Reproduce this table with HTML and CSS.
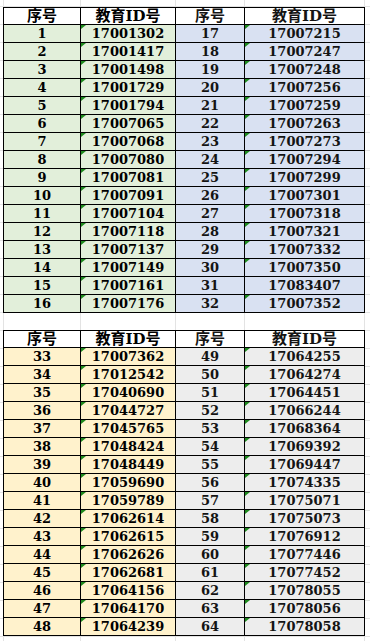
FILE: index.html
```html
<!DOCTYPE html>
<html lang="zh">
<head>
<meta charset="utf-8">
<title>教育ID号</title>
<link rel="stylesheet" href="styles.css">
</head>
<body>
<div class="sheet">
  <div class="tbl">
    <div class="c h b">序号</div><div class="c h b">教育ID号</div><div class="c h r">序号</div><div class="c h r">教育ID号</div>
    <div class="c g b">1</div><div class="c g b t">17001302</div><div class="c bl r">17</div><div class="c bl r t">17007215</div>
    <div class="c g b">2</div><div class="c g b t">17001417</div><div class="c bl r">18</div><div class="c bl r t">17007247</div>
    <div class="c g b">3</div><div class="c g b t">17001498</div><div class="c bl r">19</div><div class="c bl r t">17007248</div>
    <div class="c g b">4</div><div class="c g b t">17001729</div><div class="c bl r">20</div><div class="c bl r t">17007256</div>
    <div class="c g b">5</div><div class="c g b t">17001794</div><div class="c bl r">21</div><div class="c bl r t">17007259</div>
    <div class="c g b">6</div><div class="c g b t">17007065</div><div class="c bl r">22</div><div class="c bl r t">17007263</div>
    <div class="c g b">7</div><div class="c g b t">17007068</div><div class="c bl r">23</div><div class="c bl r t">17007273</div>
    <div class="c g b">8</div><div class="c g b t">17007080</div><div class="c bl r">24</div><div class="c bl r t">17007294</div>
    <div class="c g b">9</div><div class="c g b t">17007081</div><div class="c bl r">25</div><div class="c bl r t">17007299</div>
    <div class="c g b">10</div><div class="c g b t">17007091</div><div class="c bl r">26</div><div class="c bl r t">17007301</div>
    <div class="c g b">11</div><div class="c g b t">17007104</div><div class="c bl r">27</div><div class="c bl r t">17007318</div>
    <div class="c g b">12</div><div class="c g b t">17007118</div><div class="c bl r">28</div><div class="c bl r t">17007321</div>
    <div class="c g b">13</div><div class="c g b t">17007137</div><div class="c bl r">29</div><div class="c bl r t">17007332</div>
    <div class="c g b">14</div><div class="c g b t">17007149</div><div class="c bl r">30</div><div class="c bl r t">17007350</div>
    <div class="c g b">15</div><div class="c g b t">17007161</div><div class="c bl r">31</div><div class="c bl r">17083407</div>
    <div class="c g b">16</div><div class="c g b t">17007176</div><div class="c bl r">32</div><div class="c bl r t">17007352</div>
  </div>
  <div class="tbl">
    <div class="c h b">序号</div><div class="c h b">教育ID号</div><div class="c h r">序号</div><div class="c h r">教育ID号</div>
    <div class="c o b">33</div><div class="c o b t">17007362</div><div class="c gr r">49</div><div class="c gr r t">17064255</div>
    <div class="c o b">34</div><div class="c o b t">17012542</div><div class="c gr r">50</div><div class="c gr r t">17064274</div>
    <div class="c o b">35</div><div class="c o b t">17040690</div><div class="c gr r">51</div><div class="c gr r t">17064451</div>
    <div class="c o b">36</div><div class="c o b t">17044727</div><div class="c gr r">52</div><div class="c gr r t">17066244</div>
    <div class="c o b">37</div><div class="c o b t">17045765</div><div class="c gr r">53</div><div class="c gr r t">17068364</div>
    <div class="c o b">38</div><div class="c o b t">17048424</div><div class="c gr r">54</div><div class="c gr r t">17069392</div>
    <div class="c o b">39</div><div class="c o b t">17048449</div><div class="c gr r">55</div><div class="c gr r t">17069447</div>
    <div class="c o b">40</div><div class="c o b t">17059690</div><div class="c gr r">56</div><div class="c gr r t">17074335</div>
    <div class="c o b">41</div><div class="c o b t">17059789</div><div class="c gr r">57</div><div class="c gr r t">17075071</div>
    <div class="c o b">42</div><div class="c o b t">17062614</div><div class="c gr r">58</div><div class="c gr r t">17075073</div>
    <div class="c o b">43</div><div class="c o b t">17062615</div><div class="c gr r">59</div><div class="c gr r t">17076912</div>
    <div class="c o b">44</div><div class="c o b t">17062626</div><div class="c gr r">60</div><div class="c gr r t">17077446</div>
    <div class="c o b">45</div><div class="c o b t">17062681</div><div class="c gr r">61</div><div class="c gr r t">17077452</div>
    <div class="c o b">46</div><div class="c o b t">17064156</div><div class="c gr r">62</div><div class="c gr r t">17078055</div>
    <div class="c o b">47</div><div class="c o b t">17064170</div><div class="c gr r">63</div><div class="c gr r t">17078056</div>
    <div class="c o b">48</div><div class="c o b t">17064239</div><div class="c gr r">64</div><div class="c gr r t">17078058</div>
  </div>
</div>
</body>
</html>
```

FILE: styles.css
```css
html, body {
  margin: 0;
  padding: 0;
}

body {
  width: 370px;
  height: 641px;
  overflow: hidden;
  background-color: #ffffff;
  background-image:
    linear-gradient(to right, transparent 3px, #e3e3e3 3px, #e3e3e3 4px, transparent 4px),
    linear-gradient(to right, transparent 80px, #e3e3e3 80px, #e3e3e3 81px, transparent 81px),
    linear-gradient(to right, transparent 175px, #e3e3e3 175px, #e3e3e3 176px, transparent 176px),
    linear-gradient(to right, transparent 244px, #e3e3e3 244px, #e3e3e3 245px, transparent 245px),
    linear-gradient(to right, transparent 364px, #e3e3e3 364px, #e3e3e3 365px, transparent 365px),
    repeating-linear-gradient(to bottom, transparent 0, transparent 6px, #e3e3e3 6px, #e3e3e3 7px, transparent 7px, transparent 18px);
}

.sheet {
  display: flex;
  flex-direction: column;
  gap: 17px;
  padding: 7px 0 0 3px;
}

.tbl {
  display: grid;
  grid-template-columns: 76px 94px 68px 119px;
  grid-template-rows: 16px repeat(16, 17px);
  gap: 1px;
  padding: 1px;
  background: #000000;
  width: max-content;
}

.c {
  display: flex;
  align-items: center;
  justify-content: center;
  font-family: "DejaVu Serif", "Noto Sans CJK SC", serif;
  font-weight: 700;
  font-size: 13px;
  line-height: 1;
  color: #000000;
  white-space: nowrap;
}

.r {
  color: #141414;
}

.h {
  background: #ffffff;
  font-size: 15px;
}

.g { background: #e2efda; }
.bl { background: #d9e1f2; }
.o { background: #fff2cc; }
.gr { background: #ededed; }

.t { position: relative; }
.t::before {
  content: "";
  position: absolute;
  left: 0;
  top: 0;
  width: 0;
  height: 0;
  border-top: 4px solid #1e8a1e;
  border-right: 5px solid transparent;
}
```
